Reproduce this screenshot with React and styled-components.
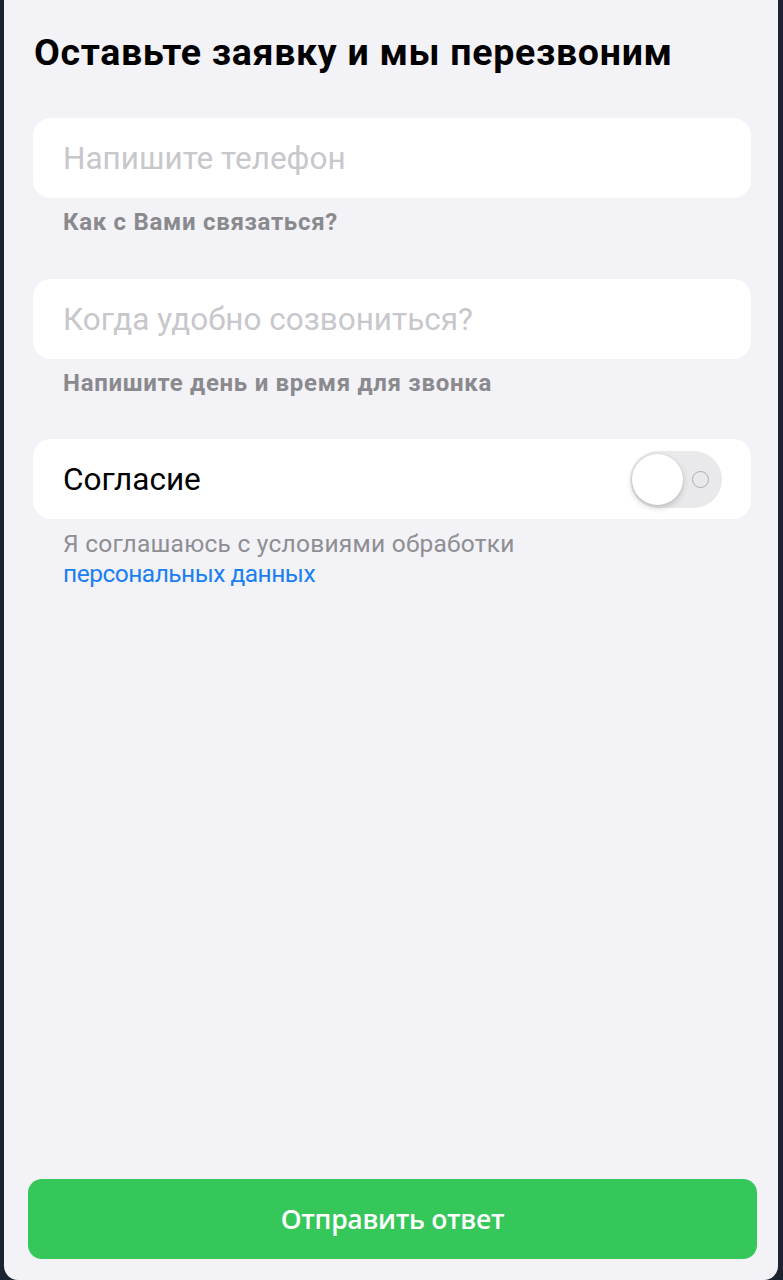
import React from "react";
import styled, { createGlobalStyle } from "styled-components";

const Global = createGlobalStyle`
  html, body { margin: 0; padding: 0; background: #1b2230; }
  #root { min-height: 1280px; }
`;

const Backdrop = styled.div`
  height: 1280px;
  background: #1b2230;
  padding: 0 5px 0 4px;
  box-sizing: border-box;
`;

const Sheet = styled.div`
  height: 1280px;
  background: #f2f2f7;
  border-radius: 0 0 14px 14px;
  box-sizing: border-box;
  padding: 32px 27px 21px 29px;
  display: flex;
  flex-direction: column;
  font-family: Roboto, "Liberation Sans", sans-serif;
`;

const Title = styled.h1`
  margin: 0 0 46px 1px;
  font-size: 37.5px;
  font-weight: 700;
  color: #000;
  line-height: 40px;
  letter-spacing: 0.7px;
  white-space: nowrap;
`;

const Group = styled.div`
  margin-bottom: ${(p) => p.$gap || 0}px;
`;

const Card = styled.div`
  height: 80px;
  background: #fff;
  border-radius: 18px;
  display: flex;
  align-items: center;
  justify-content: space-between;
  padding: 0 29px 0 30px;
  box-sizing: border-box;
`;

const Placeholder = styled.span`
  font-size: 31.5px;
  color: #c7c7cc;
`;

const Label = styled.span`
  font-size: 31.5px;
  color: #000;
`;

const Hint = styled.div`
  margin: 12px 0 0 30px;
  font-size: 24px;
  font-weight: 700;
  color: #8a8a8e;
  line-height: 24px;
  letter-spacing: 0.7px;
`;

const Note = styled.div`
  margin: 10px 0 0 30px;
  font-size: 24.5px;
  color: #8e8e93;
  line-height: 30px;
  letter-spacing: 0.25px;
`;

const Link = styled.span`
  display: block;
  color: #1a7ff0;
  letter-spacing: -0.5px;
`;

const Track = styled.div`
  position: relative;
  width: 92px;
  height: 57px;
  border-radius: 29px;
  background: #e9e9eb;
`;

const Knob = styled.div`
  position: absolute;
  left: 2px;
  top: 3px;
  width: 51px;
  height: 51px;
  border-radius: 50%;
  background: #fff;
  box-shadow: 0 3px 6px rgba(0, 0, 0, 0.18), 0 0 0 0.5px rgba(0, 0, 0, 0.06);
`;

const Ring = styled.div`
  position: absolute;
  right: 13px;
  top: 20px;
  width: 15px;
  height: 15px;
  border-radius: 50%;
  border: 1.5px solid #adadb2;
`;

const Spacer = styled.div`
  flex: 1;
`;

const Button = styled.button`
  height: 80px;
  margin-left: -5px;
  margin-right: -6px;
  border: none;
  border-radius: 14px;
  background: #35c759;
  color: #fff;
  font-family: "Open Sans", sans-serif;
  font-size: 26.5px;
  font-weight: 600;
  letter-spacing: -0.3px;
`;

export default function App() {
  return (
    <>
      <Global />
      <Backdrop>
        <Sheet>
          <Title>Оставьте заявку и мы перезвоним</Title>
          <Group $gap={45}>
            <Card>
              <Placeholder>Напишите телефон</Placeholder>
            </Card>
            <Hint>Как с Вами связаться?</Hint>
          </Group>
          <Group $gap={44}>
            <Card>
              <Placeholder>Когда удобно созвониться?</Placeholder>
            </Card>
            <Hint>Напишите день и время для звонка</Hint>
          </Group>
          <Group>
            <Card>
              <Label>Согласие</Label>
              <Track>
                <Knob />
                <Ring />
              </Track>
            </Card>
            <Note>
              Я соглашаюсь с условиями обработки
              <Link>персональных данных</Link>
            </Note>
          </Group>
          <Spacer />
          <Button>Отправить ответ</Button>
        </Sheet>
      </Backdrop>
    </>
  );
}
